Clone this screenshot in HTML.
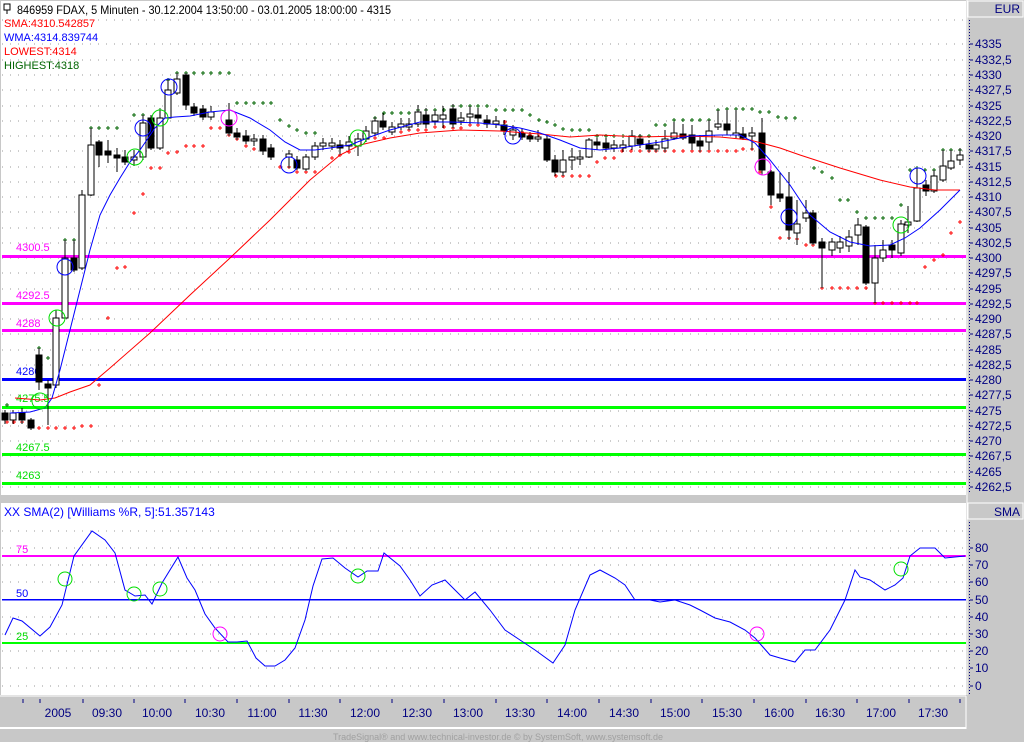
<!DOCTYPE html>
<html><head><meta charset="utf-8"><style>
html,body{margin:0;padding:0;background:#c8c8c8;}
svg{display:block;font-family:"Liberation Sans",sans-serif;}
.f{fill:#000;stroke:#000;stroke-width:1}
.h{fill:#fff;stroke:#000;stroke-width:1}
.w{stroke:#000;stroke-width:1}
.g{stroke:#999;stroke-width:1;stroke-dasharray:1 7}
</style></head><body>
<svg width="1024" height="742" viewBox="0 0 1024 742" xmlns="http://www.w3.org/2000/svg" shape-rendering="crispEdges">
<rect x="0" y="0" width="1024" height="742" fill="#c8c8c8"/>
<rect x="1" y="1" width="965" height="494" fill="#fff"/>
<rect x="1" y="503" width="965" height="192" fill="#fff"/>
<line x1="967" y1="0" x2="967" y2="695" stroke="#fff"/>
<rect x="968" y="1" width="55" height="16" fill="#c8c8c8" stroke="#fff"/>
<text x="1020" y="13" font-size="12" fill="#000080" text-anchor="end">EUR</text>
<rect x="968" y="503" width="55" height="16" fill="#c8c8c8" stroke="#fff"/>
<text x="1020" y="516" font-size="12" fill="#000080" text-anchor="end">SMA</text>
<line x1="969.5" y1="20" x2="969.5" y2="494" stroke="#000080" stroke-dasharray="1 2"/>
<line x1="969.5" y1="522" x2="969.5" y2="694" stroke="#000080" stroke-dasharray="1 2"/>
<line x1="0" y1="696" x2="966" y2="696" stroke="#fff"/>
<line x1="0" y1="728" x2="966" y2="728" stroke="#fff" stroke-width="2"/>
<line x1="966" y1="696" x2="966" y2="729" stroke="#fff"/>

<g class="g">
<line x1="2" y1="20" x2="966" y2="20"/><line x1="2" y1="44" x2="966" y2="44"/><line x1="2" y1="60" x2="966" y2="60"/><line x1="2" y1="75" x2="966" y2="75"/><line x1="2" y1="90" x2="966" y2="90"/><line x1="2" y1="106" x2="966" y2="106"/><line x1="2" y1="121" x2="966" y2="121"/><line x1="2" y1="136" x2="966" y2="136"/><line x1="2" y1="151" x2="966" y2="151"/><line x1="2" y1="167" x2="966" y2="167"/><line x1="2" y1="182" x2="966" y2="182"/><line x1="2" y1="197" x2="966" y2="197"/><line x1="2" y1="212" x2="966" y2="212"/><line x1="2" y1="228" x2="966" y2="228"/><line x1="2" y1="243" x2="966" y2="243"/><line x1="2" y1="258" x2="966" y2="258"/><line x1="2" y1="273" x2="966" y2="273"/><line x1="2" y1="289" x2="966" y2="289"/><line x1="2" y1="304" x2="966" y2="304"/><line x1="2" y1="319" x2="966" y2="319"/><line x1="2" y1="334" x2="966" y2="334"/><line x1="2" y1="350" x2="966" y2="350"/><line x1="2" y1="365" x2="966" y2="365"/><line x1="2" y1="380" x2="966" y2="380"/><line x1="2" y1="395" x2="966" y2="395"/><line x1="2" y1="411" x2="966" y2="411"/><line x1="2" y1="426" x2="966" y2="426"/><line x1="2" y1="441" x2="966" y2="441"/><line x1="2" y1="456" x2="966" y2="456"/><line x1="2" y1="472" x2="966" y2="472"/><line x1="2" y1="487" x2="966" y2="487"/>
</g>
<g font-size="12" fill="#000080">
<text x="975" y="48">4335</text><text x="975" y="64">4332,5</text><text x="975" y="79">4330</text><text x="975" y="94">4327,5</text><text x="975" y="110">4325</text><text x="975" y="125">4322,5</text><text x="975" y="140">4320</text><text x="975" y="155">4317,5</text><text x="975" y="171">4315</text><text x="975" y="186">4312,5</text><text x="975" y="201">4310</text><text x="975" y="216">4307,5</text><text x="975" y="232">4305</text><text x="975" y="247">4302,5</text><text x="975" y="262">4300</text><text x="975" y="277">4297,5</text><text x="975" y="293">4295</text><text x="975" y="308">4292,5</text><text x="975" y="323">4290</text><text x="975" y="338">4287,5</text><text x="975" y="354">4285</text><text x="975" y="369">4282,5</text><text x="975" y="384">4280</text><text x="975" y="399">4277,5</text><text x="975" y="415">4275</text><text x="975" y="430">4272,5</text><text x="975" y="445">4270</text><text x="975" y="460">4267,5</text><text x="975" y="476">4265</text><text x="975" y="491">4262,5</text>
</g>
<g stroke="#000080"><path d="M970 44h3M970 60h3M970 75h3M970 90h3M970 106h3M970 121h3M970 136h3M970 151h3M970 167h3M970 182h3M970 197h3M970 212h3M970 228h3M970 243h3M970 258h3M970 273h3M970 289h3M970 304h3M970 319h3M970 334h3M970 350h3M970 365h3M970 380h3M970 395h3M970 411h3M970 426h3M970 441h3M970 456h3M970 472h3M970 487h3"/></g>

<rect x="2" y="255" width="964" height="3" fill="#ff00ff"/>
<rect x="2" y="302" width="964" height="3" fill="#ff00ff"/>
<rect x="2" y="329" width="964" height="3" fill="#ff00ff"/>
<rect x="2" y="378" width="964" height="3" fill="#0000ff"/>
<rect x="2" y="406" width="964" height="3" fill="#00ff00"/>
<rect x="2" y="453" width="964" height="3" fill="#00ff00"/>
<rect x="2" y="482" width="964" height="3" fill="#00ff00"/>
<g font-size="11">
<text x="16" y="251" fill="#ff00ff">4300.5</text>
<text x="16" y="299" fill="#ff00ff">4292.5</text>
<text x="16" y="327" fill="#ff00ff">4288</text>
<text x="16" y="375" fill="#0000ff">4280</text>
<text x="16" y="402" fill="#00dd00">4275.5</text>
<text x="16" y="451" fill="#00dd00">4267.5</text>
<text x="16" y="479" fill="#00dd00">4263</text>
</g>

<path stroke="#006400" stroke-width="1" fill="none" d="M5 405h4M7 403v4M37 348h4M39 346v4M46 358h4M48 356v4M63 240h4M65 238v4M72 240h4M74 238v4M89 128h4M91 126v4M97 128h4M99 126v4M106 128h4M108 126v4M115 128h4M117 126v4M132 115h4M134 113v4M141 115h4M143 113v4M158 110h4M160 108v4M166 80h4M168 78v4M175 73h4M177 71v4M184 73h4M186 71v4M192 73h4M194 71v4M201 73h4M203 71v4M209 73h4M211 71v4M218 73h4M220 71v4M227 73h4M229 71v4M235 103h4M237 101v4M244 103h4M246 101v4M252 103h4M254 101v4M261 103h4M263 101v4M269 103h4M271 101v4M278 120h4M280 118v4M287 126h4M289 124v4M295 130h4M297 128v4M304 133h4M306 131v4M313 133h4M315 131v4M373 118h4M375 116v4M382 113h4M384 111v4M390 113h4M392 111v4M399 113h4M401 111v4M407 113h4M409 111v4M416 110h4M418 108v4M424 110h4M426 108v4M433 110h4M435 108v4M442 110h4M444 108v4M451 106h4M453 104v4M459 106h4M461 104v4M468 106h4M470 104v4M476 106h4M478 104v4M485 106h4M487 104v4M494 110h4M496 108v4M503 110h4M505 108v4M511 110h4M513 108v4M520 110h4M522 108v4M528 115h4M530 113v4M537 120h4M539 118v4M545 122h4M547 120v4M553 125h4M555 123v4M561 129h4M563 127v4M570 130h4M572 128v4M578 130h4M580 128v4M587 130h4M589 128v4M595 136h4M597 134v4M604 136h4M606 134v4M612 136h4M614 134v4M621 136h4M623 134v4M638 136h4M640 134v4M647 136h4M649 134v4M654 125h4M656 123v4M663 125h4M665 123v4M672 120h4M674 118v4M681 120h4M683 118v4M690 120h4M692 118v4M698 120h4M700 118v4M707 120h4M709 118v4M716 110h4M718 108v4M725 109h4M727 107v4M734 109h4M736 107v4M741 109h4M743 107v4M750 109h4M752 107v4M758 112h4M760 110v4M767 112h4M769 110v4M776 117h4M778 115v4M784 118h4M786 116v4M793 118h4M795 116v4M812 168h4M814 166v4M820 172h4M822 170v4M830 178h4M832 176v4M838 200h4M840 198v4M846 200h4M848 198v4M855 212h4M857 210v4M864 218h4M866 216v4M873 218h4M875 216v4M881 218h4M883 216v4M890 218h4M892 216v4M899 205h4M901 203v4M908 170h4M910 168v4M915 168h4M917 166v4M923 170h4M925 168v4M932 170h4M934 168v4M941 150h4M943 148v4M949 150h4M951 148v4M958 150h4M960 148v4"/>
<path stroke="#ff0000" stroke-width="1" fill="none" d="M5 422h4M7 420v4M12 422h4M14 420v4M20 422h4M22 420v4M29 428h4M31 426v4M37 428h4M39 426v4M46 428h4M48 426v4M54 428h4M56 426v4M63 428h4M65 426v4M72 428h4M74 426v4M80 426h4M82 424v4M89 426h4M91 424v4M97 385h4M99 383v4M106 318h4M108 316v4M115 268h4M117 266v4M123 267h4M125 265v4M132 213h4M134 211v4M141 194h4M143 192v4M149 168h4M151 166v4M158 168h4M160 166v4M166 153h4M168 151v4M175 152h4M177 150v4M184 146h4M186 144v4M192 146h4M194 144v4M201 146h4M203 144v4M209 128h4M211 126v4M218 128h4M220 126v4M227 135h4M229 133v4M235 139h4M237 137v4M244 146h4M246 144v4M252 149h4M254 147v4M261 149h4M263 147v4M269 157h4M271 155v4M278 167h4M280 165v4M287 167h4M289 165v4M295 172h4M297 170v4M304 172h4M306 170v4M313 172h4M315 170v4M330 158h4M332 156v4M338 155h4M340 153v4M347 152h4M349 150v4M356 145h4M358 143v4M364 137h4M366 135v4M373 138h4M375 136v4M382 138h4M384 136v4M390 132h4M392 130v4M399 132h4M401 130v4M407 130h4M409 128v4M416 130h4M418 128v4M424 130h4M426 128v4M433 127h4M435 125v4M442 127h4M444 125v4M451 128h4M453 126v4M459 128h4M461 126v4M468 125h4M470 123v4M476 125h4M478 123v4M485 122h4M487 120v4M494 122h4M496 120v4M503 122h4M505 120v4M511 127h4M513 125v4M520 132h4M522 130v4M528 135h4M530 133v4M537 137h4M539 135v4M545 145h4M547 143v4M554 176h4M556 174v4M561 176h4M563 174v4M570 176h4M572 174v4M578 176h4M580 174v4M587 176h4M589 174v4M595 162h4M597 160v4M603 158h4M605 156v4M612 158h4M614 156v4M620 151h4M622 149v4M629 151h4M631 149v4M638 151h4M640 149v4M647 151h4M649 149v4M654 151h4M656 149v4M663 151h4M665 149v4M672 151h4M674 149v4M681 151h4M683 149v4M690 151h4M692 149v4M698 151h4M700 149v4M707 151h4M709 149v4M716 151h4M718 149v4M725 151h4M727 149v4M734 151h4M736 149v4M741 149h4M743 147v4M750 149h4M752 147v4M758 172h4M760 170v4M769 207h4M771 205v4M778 238h4M780 236v4M787 238h4M789 236v4M795 239h4M797 237v4M804 245h4M806 243v4M811 245h4M813 243v4M820 288h4M822 286v4M830 288h4M832 286v4M838 288h4M840 286v4M846 288h4M848 286v4M855 288h4M857 286v4M864 288h4M866 286v4M873 303h4M875 301v4M881 303h4M883 301v4M890 303h4M892 301v4M899 303h4M901 301v4M908 303h4M910 301v4M915 303h4M917 301v4M923 267h4M925 265v4M932 260h4M934 258v4M941 255h4M943 253v4M949 233h4M951 231v4M958 222h4M960 220v4"/>

<g>
<line class="w" x1="5" y1="410" x2="5" y2="424"/><rect class="f" x="2" y="413" width="6" height="7"/>
<line class="w" x1="13" y1="410" x2="13" y2="424"/><rect class="h" x="10" y="413" width="6" height="7"/>
<line class="w" x1="22" y1="408" x2="22" y2="424"/><rect class="f" x="19" y="413" width="6" height="7"/>
<line class="w" x1="31" y1="418" x2="31" y2="430"/><rect class="f" x="28" y="420" width="6" height="8"/>
<line class="w" x1="39" y1="348" x2="39" y2="390"/><rect class="f" x="36" y="355" width="6" height="27"/>
<line class="w" x1="48" y1="380" x2="48" y2="425"/><rect class="f" x="45" y="384" width="6" height="4"/>
<line class="w" x1="56" y1="310" x2="56" y2="388"/><rect class="h" x="53" y="318" width="6" height="67"/>
<line class="w" x1="65" y1="240" x2="65" y2="318"/><rect class="h" x="62" y="258" width="6" height="60"/>
<line class="w" x1="74" y1="240" x2="74" y2="272"/><rect class="f" x="71" y="258" width="6" height="12"/>
<line class="w" x1="82" y1="190" x2="82" y2="270"/><rect class="h" x="79" y="195" width="6" height="73"/>
<line class="w" x1="91" y1="128" x2="91" y2="196"/><rect class="h" x="88" y="145" width="6" height="50"/>
<line class="w" x1="99" y1="140" x2="99" y2="167"/><rect class="f" x="96" y="142" width="6" height="13"/>
<line class="w" x1="108" y1="140" x2="108" y2="163"/><rect class="f" x="105" y="151" width="6" height="4"/>
<line class="w" x1="117" y1="148" x2="117" y2="172"/><rect class="f" x="114" y="155" width="6" height="3"/>
<line class="w" x1="125" y1="150" x2="125" y2="165"/><rect class="f" x="122" y="157" width="6" height="5"/>
<line class="w" x1="134" y1="150" x2="134" y2="166"/><rect class="h" x="131" y="157" width="6" height="3"/>
<line class="w" x1="143" y1="115" x2="143" y2="160"/><rect class="h" x="140" y="123" width="6" height="34"/>
<line class="w" x1="151" y1="115" x2="151" y2="150"/><rect class="f" x="148" y="118" width="6" height="30"/>
<line class="w" x1="160" y1="110" x2="160" y2="150"/><rect class="h" x="157" y="118" width="6" height="30"/>
<line class="w" x1="168" y1="80" x2="168" y2="120"/><rect class="h" x="165" y="90" width="6" height="28"/>
<line class="w" x1="177" y1="73" x2="177" y2="95"/><rect class="h" x="174" y="79" width="6" height="14"/>
<line class="w" x1="186" y1="73" x2="186" y2="110"/><rect class="f" x="183" y="75" width="6" height="30"/>
<line class="w" x1="194" y1="103" x2="194" y2="116"/><rect class="f" x="191" y="107" width="6" height="6"/>
<line class="w" x1="203" y1="105" x2="203" y2="120"/><rect class="f" x="200" y="109" width="6" height="8"/>
<line class="w" x1="211" y1="106" x2="211" y2="120"/><rect class="h" x="208" y="112" width="6" height="5"/>
<line class="w" x1="229" y1="103" x2="229" y2="136"/><rect class="f" x="226" y="120" width="6" height="13"/>
<line class="w" x1="237" y1="128" x2="237" y2="140"/><rect class="f" x="234" y="133" width="6" height="4"/>
<line class="w" x1="246" y1="130" x2="246" y2="144"/><rect class="f" x="243" y="136" width="6" height="5"/>
<line class="w" x1="254" y1="134" x2="254" y2="146"/><rect class="h" x="251" y="139" width="6" height="2"/>
<line class="w" x1="263" y1="135" x2="263" y2="155"/><rect class="f" x="260" y="139" width="6" height="12"/>
<line class="w" x1="271" y1="144" x2="271" y2="160"/><rect class="f" x="268" y="148" width="6" height="9"/>
<line class="w" x1="289" y1="150" x2="289" y2="168"/><rect class="h" x="286" y="154" width="6" height="3"/>
<line class="w" x1="297" y1="156" x2="297" y2="170"/><rect class="f" x="294" y="160" width="6" height="8"/>
<line class="w" x1="306" y1="154" x2="306" y2="171"/><rect class="h" x="303" y="157" width="6" height="12"/>
<line class="w" x1="315" y1="142" x2="315" y2="160"/><rect class="h" x="312" y="146" width="6" height="11"/>
<line class="w" x1="323" y1="138" x2="323" y2="150"/><rect class="h" x="320" y="143" width="6" height="3"/>
<line class="w" x1="332" y1="138" x2="332" y2="150"/><rect class="h" x="329" y="143" width="6" height="3"/>
<line class="w" x1="340" y1="140" x2="340" y2="155"/><rect class="f" x="337" y="145" width="6" height="3"/>
<line class="w" x1="349" y1="136" x2="349" y2="150"/><rect class="h" x="346" y="142" width="6" height="4"/>
<line class="w" x1="358" y1="133" x2="358" y2="156"/><rect class="h" x="355" y="139" width="6" height="7"/>
<line class="w" x1="366" y1="126" x2="366" y2="142"/><rect class="h" x="363" y="131" width="6" height="8"/>
<line class="w" x1="375" y1="117" x2="375" y2="136"/><rect class="h" x="372" y="121" width="6" height="12"/>
<line class="w" x1="383" y1="113" x2="383" y2="130"/><rect class="f" x="380" y="121" width="6" height="6"/>
<line class="w" x1="392" y1="122" x2="392" y2="135"/><rect class="h" x="389" y="127" width="6" height="5"/>
<line class="w" x1="401" y1="118" x2="401" y2="130"/><rect class="h" x="398" y="124" width="6" height="3"/>
<line class="w" x1="409" y1="118" x2="409" y2="130"/><rect class="h" x="406" y="124" width="6" height="3"/>
<line class="w" x1="418" y1="105" x2="418" y2="127"/><rect class="h" x="415" y="112" width="6" height="12"/>
<line class="w" x1="426" y1="108" x2="426" y2="128"/><rect class="f" x="423" y="115" width="6" height="9"/>
<line class="w" x1="435" y1="110" x2="435" y2="125"/><rect class="h" x="432" y="115" width="6" height="6"/>
<line class="w" x1="443" y1="106" x2="443" y2="128"/><rect class="h" x="440" y="115" width="6" height="4"/>
<line class="w" x1="453" y1="104" x2="453" y2="128"/><rect class="f" x="450" y="109" width="6" height="15"/>
<line class="w" x1="461" y1="112" x2="461" y2="125"/><rect class="h" x="458" y="118" width="6" height="3"/>
<line class="w" x1="470" y1="106" x2="470" y2="124"/><rect class="h" x="467" y="114" width="6" height="3"/>
<line class="w" x1="478" y1="108" x2="478" y2="124"/><rect class="f" x="475" y="115" width="6" height="3"/>
<line class="w" x1="487" y1="115" x2="487" y2="128"/><rect class="f" x="484" y="120" width="6" height="4"/>
<line class="w" x1="496" y1="116" x2="496" y2="128"/><rect class="h" x="493" y="121" width="6" height="3"/>
<line class="w" x1="504" y1="120" x2="504" y2="135"/><rect class="f" x="501" y="125" width="6" height="6"/>
<line class="w" x1="513" y1="125" x2="513" y2="140"/><rect class="h" x="510" y="130" width="6" height="5"/>
<line class="w" x1="522" y1="128" x2="522" y2="140"/><rect class="f" x="519" y="133" width="6" height="4"/>
<line class="w" x1="530" y1="132" x2="530" y2="142"/><rect class="f" x="527" y="136" width="6" height="3"/>
<line class="w" x1="538" y1="130" x2="538" y2="142"/><rect class="h" x="535" y="137" width="6" height="2"/>
<line class="w" x1="547" y1="136" x2="547" y2="162"/><rect class="f" x="544" y="139" width="6" height="21"/>
<line class="w" x1="555" y1="155" x2="555" y2="176"/><rect class="f" x="552" y="160" width="6" height="12"/>
<line class="w" x1="563" y1="150" x2="563" y2="176"/><rect class="h" x="560" y="160" width="6" height="12"/>
<line class="w" x1="572" y1="148" x2="572" y2="170"/><rect class="h" x="569" y="157" width="6" height="3"/>
<line class="w" x1="580" y1="150" x2="580" y2="165"/><rect class="h" x="577" y="157" width="6" height="2"/>
<line class="w" x1="589" y1="138" x2="589" y2="158"/><rect class="h" x="586" y="140" width="6" height="17"/>
<line class="w" x1="597" y1="138" x2="597" y2="150"/><rect class="f" x="594" y="142" width="6" height="3"/>
<line class="w" x1="606" y1="138" x2="606" y2="152"/><rect class="f" x="603" y="143" width="6" height="5"/>
<line class="w" x1="614" y1="140" x2="614" y2="152"/><rect class="h" x="611" y="145" width="6" height="3"/>
<line class="w" x1="623" y1="140" x2="623" y2="152"/><rect class="h" x="620" y="145" width="6" height="3"/>
<line class="w" x1="632" y1="130" x2="632" y2="150"/><rect class="h" x="629" y="136" width="6" height="10"/>
<line class="w" x1="640" y1="134" x2="640" y2="148"/><rect class="f" x="637" y="139" width="6" height="5"/>
<line class="w" x1="649" y1="140" x2="649" y2="152"/><rect class="f" x="646" y="145" width="6" height="4"/>
<line class="w" x1="656" y1="140" x2="656" y2="152"/><rect class="h" x="653" y="145" width="6" height="4"/>
<line class="w" x1="665" y1="130" x2="665" y2="152"/><rect class="h" x="662" y="139" width="6" height="9"/>
<line class="w" x1="674" y1="122" x2="674" y2="140"/><rect class="h" x="671" y="133" width="6" height="5"/>
<line class="w" x1="683" y1="124" x2="683" y2="140"/><rect class="f" x="680" y="134" width="6" height="4"/>
<line class="w" x1="692" y1="125" x2="692" y2="150"/><rect class="f" x="689" y="135" width="6" height="8"/>
<line class="w" x1="700" y1="135" x2="700" y2="152"/><rect class="f" x="697" y="141" width="6" height="5"/>
<line class="w" x1="709" y1="120" x2="709" y2="150"/><rect class="h" x="706" y="131" width="6" height="11"/>
<line class="w" x1="718" y1="110" x2="718" y2="130"/><rect class="h" x="715" y="124" width="6" height="3"/>
<line class="w" x1="727" y1="110" x2="727" y2="135"/><rect class="f" x="724" y="124" width="6" height="6"/>
<line class="w" x1="736" y1="110" x2="736" y2="138"/><rect class="h" x="733" y="133" width="6" height="2"/>
<line class="w" x1="743" y1="127" x2="743" y2="140"/><rect class="f" x="740" y="134" width="6" height="4"/>
<line class="w" x1="752" y1="127" x2="752" y2="150"/><rect class="h" x="749" y="133" width="6" height="3"/>
<line class="w" x1="762" y1="118" x2="762" y2="175"/><rect class="f" x="759" y="133" width="6" height="37"/>
<line class="w" x1="771" y1="170" x2="771" y2="205"/><rect class="f" x="768" y="172" width="6" height="23"/>
<line class="w" x1="780" y1="172" x2="780" y2="202"/><rect class="f" x="777" y="194" width="6" height="4"/>
<line class="w" x1="789" y1="172" x2="789" y2="240"/><rect class="f" x="786" y="197" width="6" height="33"/>
<line class="w" x1="797" y1="200" x2="797" y2="245"/><rect class="h" x="794" y="224" width="6" height="9"/>
<line class="w" x1="806" y1="200" x2="806" y2="222"/><rect class="h" x="803" y="213" width="6" height="5"/>
<line class="w" x1="813" y1="210" x2="813" y2="245"/><rect class="f" x="810" y="213" width="6" height="30"/>
<line class="w" x1="822" y1="238" x2="822" y2="288"/><rect class="f" x="819" y="242" width="6" height="6"/>
<line class="w" x1="832" y1="238" x2="832" y2="256"/><rect class="h" x="829" y="242" width="6" height="8"/>
<line class="w" x1="840" y1="236" x2="840" y2="253"/><rect class="h" x="837" y="242" width="6" height="6"/>
<line class="w" x1="849" y1="230" x2="849" y2="252"/><rect class="h" x="846" y="237" width="6" height="9"/>
<line class="w" x1="858" y1="218" x2="858" y2="245"/><rect class="h" x="855" y="225" width="6" height="10"/>
<line class="w" x1="866" y1="225" x2="866" y2="285"/><rect class="f" x="863" y="227" width="6" height="56"/>
<line class="w" x1="875" y1="245" x2="875" y2="303"/><rect class="h" x="872" y="258" width="6" height="25"/>
<line class="w" x1="883" y1="240" x2="883" y2="262"/><rect class="h" x="880" y="250" width="6" height="8"/>
<line class="w" x1="892" y1="240" x2="892" y2="258"/><rect class="f" x="889" y="245" width="6" height="5"/>
<line class="w" x1="901" y1="220" x2="901" y2="256"/><rect class="h" x="898" y="224" width="6" height="29"/>
<line class="w" x1="908" y1="206" x2="908" y2="233"/><rect class="h" x="905" y="222" width="6" height="3"/>
<line class="w" x1="917" y1="168" x2="917" y2="222"/><rect class="h" x="914" y="188" width="6" height="33"/>
<line class="w" x1="926" y1="180" x2="926" y2="196"/><rect class="f" x="923" y="185" width="6" height="6"/>
<line class="w" x1="934" y1="170" x2="934" y2="193"/><rect class="h" x="931" y="176" width="6" height="15"/>
<line class="w" x1="943" y1="150" x2="943" y2="182"/><rect class="h" x="940" y="166" width="6" height="14"/>
<line class="w" x1="951" y1="150" x2="951" y2="170"/><rect class="h" x="948" y="161" width="6" height="7"/>
<line class="w" x1="960" y1="148" x2="960" y2="165"/><rect class="h" x="957" y="155" width="6" height="5"/>
</g>

<polyline fill="none" stroke="#ff0000" stroke-width="1" shape-rendering="auto" points="15,398 40,400 55,398 70,392 90,385 110,368 150,333 190,295 230,258 270,220 310,180 340,155 360,145 390,138 420,133 460,130 500,131 540,134 570,137 600,135 640,137 680,136 720,137 750,140 780,148 800,155 840,168 880,180 910,187 935,190 960,190"/>
<polyline fill="none" stroke="#0000ff" stroke-width="1" shape-rendering="auto" points="10,413 30,412 45,408 52,398 60,370 70,330 80,290 90,250 100,215 110,195 120,178 130,162 140,150 155,128 165,118 175,117 190,116 210,112 230,110 250,118 270,130 285,142 300,150 315,150 330,148 350,145 370,137 390,130 420,122 450,122 480,123 500,125 520,128 540,133 560,140 580,148 600,150 620,148 640,145 660,142 690,136 720,135 740,135 755,143 770,160 790,185 810,215 830,232 850,242 870,246 890,245 905,238 920,228 940,210 960,190"/>

<g fill="none" stroke-width="1" shape-rendering="auto">
<circle cx="65" cy="267" r="8" stroke="#0000ff"/>
<circle cx="57" cy="318" r="8" stroke="#00dd00"/>
<circle cx="40" cy="401" r="8" stroke="#00dd00"/>
<circle cx="135" cy="157" r="8" stroke="#00dd00"/>
<circle cx="143" cy="128" r="8" stroke="#0000ff"/>
<circle cx="160" cy="118" r="8" stroke="#00dd00"/>
<circle cx="169" cy="87" r="8" stroke="#0000ff"/>
<circle cx="229" cy="118" r="8" stroke="#ff00ff"/>
<circle cx="289" cy="165" r="8" stroke="#0000ff"/>
<circle cx="358" cy="138" r="8" stroke="#00dd00"/>
<circle cx="513" cy="136" r="8" stroke="#0000ff"/>
<circle cx="763" cy="167" r="8" stroke="#ff00ff"/>
<circle cx="789" cy="217" r="8" stroke="#0000ff"/>
<circle cx="901" cy="225" r="8" stroke="#00dd00"/>
<circle cx="918" cy="176" r="8" stroke="#0000ff"/>
</g>

<rect x="4" y="4" width="6" height="6" fill="none" stroke="#000"/><line x1="7" y1="10" x2="7" y2="14" stroke="#000"/>
<text x="17" y="14" font-size="12" fill="#000" textLength="374" lengthAdjust="spacingAndGlyphs">846959  FDAX, 5 Minuten - 30.12.2004 13:50:00 - 03.01.2005 18:00:00 - 4315</text>
<text x="4" y="27" font-size="11" fill="#ff0000">SMA:4310.542857</text>
<text x="4" y="41" font-size="11" fill="#0000ff">WMA:4314.839744</text>
<text x="4" y="55" font-size="11" fill="#ff0000">LOWEST:4314</text>
<text x="4" y="69" font-size="11" fill="#006400">HIGHEST:4318</text>

<g class="g">
<line x1="2" y1="531" x2="966" y2="531"/><line x1="2" y1="548" x2="966" y2="548"/><line x1="2" y1="565" x2="966" y2="565"/><line x1="2" y1="582" x2="966" y2="582"/><line x1="2" y1="617" x2="966" y2="617"/><line x1="2" y1="634" x2="966" y2="634"/><line x1="2" y1="651" x2="966" y2="651"/><line x1="2" y1="668" x2="966" y2="668"/><line x1="2" y1="686" x2="966" y2="686"/>
</g>
<rect x="2" y="555" width="964" height="2" fill="#ff00ff"/>
<rect x="2" y="599" width="964" height="1.5" fill="#0000ff"/>
<rect x="2" y="642" width="964" height="2" fill="#00ff00"/>
<text x="16" y="553" font-size="11" fill="#ff00ff">75</text>
<text x="16" y="597" font-size="11" fill="#0000ff">50</text>
<text x="16" y="640" font-size="11" fill="#00dd00">25</text>
<text x="4" y="516" font-size="12" fill="#0000ff">XX SMA(2) [Williams %R, 5]:51.357143</text>
<polyline fill="none" stroke="#0000ff" stroke-width="1" shape-rendering="auto" points="5,635 13,618 22,621 40,636 50,627 62,605 74,556 92,531 105,540 115,553 125,590 135,596 145,595 152,604 162,583 178,557 187,578 195,590 205,614 215,628 228,642 237,642 247,641 256,658 265,666 275,666 285,660 295,648 305,620 313,586 322,559 333,558 345,568 358,577 367,571 378,571 384,553 400,566 410,580 420,596 432,585 445,580 455,590 465,600 475,592 490,610 505,630 520,640 535,650 553,663 565,645 575,610 590,575 600,570 615,578 625,585 635,600 650,600 660,602 675,600 690,605 700,610 715,618 730,622 745,630 755,638 770,655 780,658 795,662 805,650 815,650 830,630 845,600 855,570 860,577 870,580 885,590 895,585 903,578 910,556 920,548 935,548 945,558 955,557 965,556"/>
<g fill="none" stroke-width="1" shape-rendering="auto">
<circle cx="65" cy="579" r="7" stroke="#00dd00"/>
<circle cx="134" cy="594" r="7" stroke="#00dd00"/>
<circle cx="160" cy="589" r="7" stroke="#00dd00"/>
<circle cx="358" cy="576" r="7" stroke="#00dd00"/>
<circle cx="901" cy="569" r="7" stroke="#00dd00"/>
<circle cx="220" cy="634" r="7" stroke="#ff00ff"/>
<circle cx="757" cy="634" r="7" stroke="#ff00ff"/>
</g>
<g font-size="12" fill="#000080">
<text x="975" y="552">80</text><text x="975" y="569">70</text><text x="975" y="586">60</text><text x="975" y="604">50</text><text x="975" y="621">40</text><text x="975" y="638">30</text><text x="975" y="655">20</text><text x="975" y="672">10</text><text x="975" y="690">0</text>
</g>
<path stroke="#000080" d="M970 548h3M970 565h3M970 582h3M970 600h3M970 617h3M970 634h3M970 651h3M970 668h3M970 686h3"/>

<path stroke="#000080" d="M23 699v4M40 699v4M83 699v4M134 699v4M185 699v4M237 699v4M289 699v4M340 699v4M392 699v4M444 699v4M496 699v4M547 699v4M599 699v4M651 699v4M702 699v4M754 699v4M806 699v4M857 699v4M909 699v4M960 699v4"/>
<g font-size="12" fill="#000080" text-anchor="middle">
<text x="58" y="717">2005</text><text x="107" y="717">09:30</text><text x="157" y="717">10:00</text><text x="210" y="717">10:30</text><text x="262" y="717">11:00</text><text x="313" y="717">11:30</text><text x="365" y="717">12:00</text><text x="417" y="717">12:30</text><text x="468" y="717">13:00</text><text x="520" y="717">13:30</text><text x="572" y="717">14:00</text><text x="624" y="717">14:30</text><text x="675" y="717">15:00</text><text x="727" y="717">15:30</text><text x="779" y="717">16:00</text><text x="830" y="717">16:30</text><text x="881" y="717">17:00</text><text x="933" y="717">17:30</text>
</g>
<text x="498" y="740" font-size="9" fill="#a0a0a0" text-anchor="middle">TradeSignal® and www.technical-investor.de © by  SystemSoft, www.systemsoft.de</text>
</svg>
</body></html>
